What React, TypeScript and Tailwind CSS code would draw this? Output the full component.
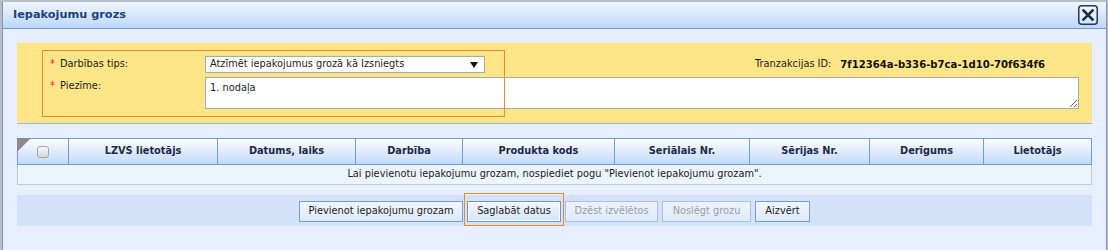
import React from "react";

const columns = [
  "",
  "LZVS lietotājs",
  "Datums, laiks",
  "Darbība",
  "Produkta kods",
  "Seriālais Nr.",
  "Sērijas Nr.",
  "Derīgums",
  "Lietotājs",
];

const buttons = [
  { label: "Pievienot iepakojumu grozam", width: "w-[164px]", disabled: false, focused: false },
  { label: "Saglabāt datus", width: "w-[94px]", disabled: false, focused: true },
  { label: "Dzēst izvēlētos", width: "w-[93px]", disabled: true, focused: false },
  { label: "Noslēgt grozu", width: "w-[89px]", disabled: true, focused: false },
  { label: "Aizvērt", width: "w-[55px]", disabled: false, focused: false },
];

function CloseButton() {
  return (
    <button className="w-[20px] h-[20px]">
      <svg width="20" height="20" viewBox="0 0 20 20">
        <defs>
          <linearGradient id="cb" x1="0" y1="0" x2="0" y2="1">
            <stop offset="0" stopColor="#f4f8fe" />
            <stop offset="1" stopColor="#d4e4fa" />
          </linearGradient>
        </defs>
        <rect x="0.75" y="0.75" width="18.5" height="18.5" rx="3" fill="url(#cb)" stroke="#27365a" strokeWidth="1.5" />
        <path d="M5.5 5.5 L14.5 14.5 M14.5 5.5 L5.5 14.5" stroke="#1f2d4c" strokeWidth="2.6" strokeLinecap="square" />
      </svg>
    </button>
  );
}

export default function App() {
  return (
    <div className="w-[1108px] h-[250px] overflow-hidden bg-[#b7bec9] font-['DejaVu_Sans',sans-serif] text-[9.8px] text-[#1c1c1c]">
      <div className="mt-[2px] ml-[2px] w-[1105px] h-[248px] border-x border-[#8797b0] bg-[#e8effc] flex flex-col">
        {/* Title bar */}
        <div className="h-[27px] shrink-0 flex items-center justify-between pl-[10px] pr-[8px] border-b border-[#6e9ad4] bg-linear-to-b from-[#f1f6fe] to-[#bdd7f8]">
          <span className="text-[11.3px] font-bold text-[#233f7e]">Iepakojumu grozs</span>
          <CloseButton />
        </div>

        <div className="px-[14px] pt-[14px]">
          {/* Form panel */}
          <div className="relative bg-[#fee588] border-b border-[#95b5e2] pt-[13px] pb-[14px] pl-[33px] pr-[13px]">
            <div className="flex items-center h-[17px]">
              <div className="w-[155px] flex items-center">
                <span className="text-[#e32020] w-[10px]">*</span>
                <span>Darbības tips:</span>
              </div>
              <div className="w-[280px] h-[17px] border border-[#a9a9a9] bg-white flex items-center justify-between pl-[4px] pr-[6px]">
                <span>Atzīmēt iepakojumus grozā kā Izsniegts</span>
                <svg width="8" height="6" viewBox="0 0 8 6">
                  <polygon points="0,0 8,0 4,6" fill="#111" />
                </svg>
              </div>
              <div className="flex-1" />
              <div className="flex items-center pr-[34px]">
                <span>Tranzakcijas ID:</span>
                <span className="ml-[9px] text-[10.1px] font-bold text-[#111]">7f12364a-b336-b7ca-1d10-70f634f6</span>
              </div>
            </div>
            <div className="flex mt-[4px]">
              <div className="w-[155px] flex pt-[3px] leading-[12px]">
                <span className="text-[#e32020] w-[10px]">*</span>
                <span>Piezīme:</span>
              </div>
              <textarea
                readOnly
                defaultValue="1. nodaļa"
                className="flex-1 h-[32px] border border-[#a9a9a9] bg-white px-[4px] pt-[3px] leading-[13px] outline-none"
              />
            </div>
            <div className="absolute left-[25px] top-[7px] w-[463px] h-[67px] border border-[#f2862a] pointer-events-none" />
          </div>

          {/* Table */}
          <div className="mt-[14px]">
            <div className="relative h-[27px] border border-[#6f9bd6] bg-linear-to-b from-[#fcfdff] to-[#c2d9f9] grid grid-cols-[51px_149px_138px_107px_152px_135px_120px_114px_107px]">
              {columns.map((c, i) => (
                <div
                  key={i}
                  className={
                    "flex items-center justify-center font-bold text-[#1b2947] " +
                    (i < columns.length - 1 ? "border-r border-[#6f9bd6]" : "")
                  }
                >
                  {i === 0 ? (
                    <div className="w-[12px] h-[12px] rounded-[3px] border border-[#a3a3a3] bg-linear-to-b from-[#f7f7f7] to-[#d9d9d9]" />
                  ) : (
                    c
                  )}
                </div>
              ))}
              <svg className="absolute -left-px -top-px" width="15" height="15" viewBox="0 0 15 15">
                <polygon points="0,0 14,0 0,14" fill="#8a8a8a" />
              </svg>
            </div>
            <div className="h-[20px] border-x border-b border-[#c5c8cc] bg-[#ecf4fe] flex items-center justify-center">
              Lai pievienotu iepakojumu grozam, nospiediet pogu "Pievienot iepakojumu grozam".
            </div>
          </div>

          {/* Button bar */}
          <div className="mt-[10px] h-[31px] bg-[#d3e1f9] flex justify-center gap-[4px] pt-[6px]">
            {buttons.map((b) => (
              <div key={b.label} className="relative">
                <button
                  className={
                    b.width +
                    " h-[21px] border bg-linear-to-b flex items-center justify-center " +
                    (b.disabled
                      ? "border-[#a8c0e6] from-[#eef4fd] to-[#e0eafb] text-[#9a9ea6]"
                      : b.focused
                      ? "border-[#6a96d6] from-[#f3f7fe] to-[#d4e4fa] text-[#1c1c1c] shadow-[inset_0_0_0_1px_#ffffff]"
                      : "border-[#769ed8] from-[#f1f6fe] to-[#dde9fb] text-[#1c1c1c]")
                  }
                >
                  {b.label}
                </button>
                {b.focused && (
                  <div className="absolute -left-[3px] -top-[8px] w-[100px] h-[33px] border border-[#f2862a] pointer-events-none" />
                )}
              </div>
            ))}
          </div>
        </div>
      </div>
    </div>
  );
}
